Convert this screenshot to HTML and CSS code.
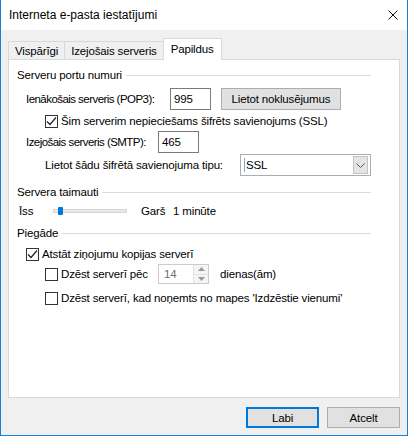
FILE: index.html
```html
<!DOCTYPE html>
<html>
<head>
<meta charset="utf-8">
<link rel="stylesheet" href="styles.css">
</head>
<body>
<div class="window">
  <div class="titlebar">
    <span class="title">Interneta e-pasta iestatījumi</span>
    <svg class="close" width="10" height="10" viewBox="0 0 10 10"><path d="M0.5 0.5L9.5 9.5M9.5 0.5L0.5 9.5" stroke="#111" stroke-width="1" fill="none"/></svg>
  </div>
  <div class="client">
    <div class="tabs">
      <div class="tab">Vispārīgi</div>
      <div class="tab">Izejošais serveris</div>
      <div class="tab active">Papildus</div>
    </div>
    <div class="panel">
      <div class="group-title t1"><span>Serveru portu numuri</span><span class="rule"></span></div>

      <div class="row r-pop3 ind1">
        <span class="label w-pop3 tight">Ienākošais serveris (POP3):</span>
        <div class="input port">995</div>
        <div class="btn btn-defaults">Lietot noklusējumus</div>
      </div>

      <div class="row r-ssl ind2">
        <span class="checkbox checked"><svg width="11" height="11" viewBox="0 0 11 11"><path d="M1 5.5L4 8.5L10 1.5" stroke="#222" stroke-width="1.2" fill="none"/></svg></span>
        <span class="cb-text">Šim serverim nepieciešams šifrēts savienojums (SSL)</span>
      </div>

      <div class="row r-smtp ind1">
        <span class="label w-smtp tight">Izejošais serveris (SMTP):</span>
        <div class="input port">465</div>
      </div>

      <div class="row r-enc ind2">
        <span class="label w-enc">Lietot šādu šifrētā savienojuma tipu:</span>
        <div class="select">
          <span class="caret"></span>
          <span class="sel-text">SSL</span>
          <span class="dd-btn"><svg width="9" height="5" viewBox="0 0 9 5"><path d="M0.5 0.5L4.5 4.5L8.5 0.5" stroke="#555" stroke-width="1" fill="none"/></svg></span>
        </div>
      </div>

      <div class="group-title t2"><span>Servera taimauti</span><span class="rule"></span></div>

      <div class="row r-slider ind0">
        <span class="label w-short">Īss</span>
        <div class="slider"><span class="track"></span><span class="thumb"></span></div>
        <span class="label w-long">Garš</span>
        <span class="label">1 minūte</span>
      </div>

      <div class="group-title t3"><span>Piegāde</span><span class="rule"></span></div>

      <div class="row r-keep ind1">
        <span class="checkbox checked"><svg width="11" height="11" viewBox="0 0 11 11"><path d="M1 5.5L4 8.5L10 1.5" stroke="#222" stroke-width="1.2" fill="none"/></svg></span>
        <span class="cb-text">Atstāt ziņojumu kopijas serverī</span>
      </div>

      <div class="row r-after ind2">
        <span class="checkbox"></span>
        <span class="cb-text w-after">Dzēst serverī pēc</span>
        <div class="spinner">
          <span class="spin-text">14</span>
          <span class="spin-btns">
            <span class="spin-up"><svg width="7" height="4" viewBox="0 0 7 4"><path d="M0 4L3.5 0L7 4Z" fill="#999"/></svg></span>
            <span class="spin-down"><svg width="7" height="4" viewBox="0 0 7 4"><path d="M0 0L3.5 4L7 0Z" fill="#999"/></svg></span>
          </span>
        </div>
        <span class="label days">dienas(ām)</span>
      </div>

      <div class="row r-del ind2">
        <span class="checkbox"></span>
        <span class="cb-text">Dzēst serverī, kad noņemts no mapes 'Izdzēstie vienumi'</span>
      </div>
    </div>
    <div class="buttons">
      <div class="btn dlg primary">Labi</div>
      <div class="btn dlg">Atcelt</div>
    </div>
  </div>
</div>
</body>
</html>
```

FILE: styles.css
```css
* { box-sizing: border-box; }
html, body { margin: 0; padding: 0; }
body {
  font-family: "Liberation Sans", Arial, sans-serif;
  font-size: 12px;
  color: #000;
  background: #fff;
}
.window {
  width: 408px;
  height: 436px;
  border: 1px solid #1a7fd4;
  border-top: none;
  display: flex;
  flex-direction: column;
}
.titlebar {
  height: 30px;
  background: #fff;
  display: flex;
  align-items: center;
  justify-content: space-between;
  padding: 0 9px 0 8px;
}
.title { font-size: 12px; line-height: 16px; }
.close { display: block; margin-top: 0; }
.client {
  flex: 1;
  background: #f0f0f0;
  padding: 8px 7px 7px 7px;
  display: flex;
  flex-direction: column;
  font-size: 11.5px;
  letter-spacing: -0.15px;
}
.tabs {
  display: flex;
  align-items: flex-end;
  height: 21px;
}
.tab {
  height: 18px;
  border: 1px solid #d9d9d9;
  border-bottom: none;
  padding: 0 6px;
  display: flex;
  align-items: center;
  line-height: 16px;
  background: #f0f0f0;
}
.tab + .tab { margin-left: -1px; }
.tab.active {
  height: 22px;
  margin-bottom: -1px;
  background: #fff;
  position: relative;
  z-index: 1;
  padding: 0 7px 2px 7px;
}
.panel {
  height: 339px;
  background: #fff;
  border: 1px solid #d9d9d9;
  padding: 6px 28px 0 0;
  display: flex;
  flex-direction: column;
}
.group-title {
  height: 18px;
  display: flex;
  align-items: center;
  padding-left: 8px;
  line-height: 16px;
}
.group-title .rule {
  flex: 1;
  height: 1px;
  background: #dcdcdc;
  margin-left: 4px;
  margin-top: 0;
}
.t2 { margin-top: 7px; }
.t3 { margin-top: 4px; }
.row {
  display: flex;
  align-items: center;
  line-height: 16px;
}
.ind0 { padding-left: 10px; }
.ind1 { padding-left: 17px; }
.ind2 { padding-left: 36px; }
.r-pop3 { height: 22px; margin-top: 4px; }
.r-ssl { height: 16px; margin-top: 3px; }
.r-smtp { height: 22px; margin-top: 2px; }
.r-enc { height: 22px; margin-top: 1px; }
.r-slider { height: 18px; margin-top: 1px; }
.r-keep { height: 16px; margin-top: 4px; }
.r-after { height: 20px; margin-top: 2px; }
.r-del { height: 16px; margin-top: 6px; }

.label { white-space: nowrap; flex: none; }
.tight { letter-spacing: -0.55px; }
.w-pop3 { width: 144px; }
.w-smtp { width: 132px; }
.w-enc { width: 195px; }
.w-short { width: 34px; }
.w-long { width: 32px; margin-left: 14px; }
.w-after { width: 97px; flex: none; }
.days { margin-left: 11px; }

.input {
  height: 22px;
  border: 1px solid #7a7a7a;
  background: #fff;
  padding: 0 3px;
  display: flex;
  align-items: center;
  flex: none;
}
.port { width: 41px; }
.btn {
  height: 22px;
  background: #e1e1e1;
  border: 1px solid #adadad;
  display: flex;
  align-items: center;
  justify-content: center;
  white-space: nowrap;
  flex: none;
}
.btn-defaults { width: 120px; margin-left: 10px; }

.checkbox {
  width: 13px;
  height: 13px;
  border: 1px solid #333;
  background: #fff;
  flex: none;
  display: flex;
  align-items: center;
  justify-content: center;
}
.checkbox svg { display: block; }
.cb-text { margin-left: 3px; white-space: nowrap; }

.select {
  width: 131px;
  height: 22px;
  border: 1px solid #adadad;
  background: #fff;
  display: flex;
  align-items: center;
  padding: 0 2px 0 3px;
  flex: none;
}
.caret { width: 1px; height: 14px; background: #7aa7d9; flex: none; }
.sel-text { flex: 1; padding-left: 1px; }
.dd-btn {
  width: 15px;
  height: 18px;
  background: #e5e5e5;
  border: 1px solid #c4c4c4;
  display: flex;
  align-items: center;
  justify-content: center;
}
.dd-btn svg { display: block; }

.slider {
  width: 74px;
  height: 18px;
  position: relative;
  flex: none;
  display: flex;
  align-items: center;
}
.track {
  display: block;
  width: 74px;
  height: 4px;
  background: #e7eaea;
  border: 1px solid #d6d6d6;
}
.thumb {
  position: absolute;
  left: 5px;
  top: 5px;
  width: 5px;
  height: 8px;
  background: #0078d7;
  border-radius: 1px;
}

.spinner {
  width: 51px;
  height: 20px;
  border: 1px solid #cccccc;
  background: #fff;
  display: flex;
  align-items: stretch;
  flex: none;
}
.spin-text { flex: 1; color: #6d6d6d; padding-left: 5px; display: flex; align-items: center; }
.spin-btns {
  width: 15px;
  display: flex;
  flex-direction: column;
  border-left: 1px solid #e3e3e3;
}
.spin-up, .spin-down {
  flex: 1;
  display: flex;
  align-items: center;
  justify-content: center;
  background: #f4f4f4;
}
.spin-up { border-bottom: 1px solid #e3e3e3; }
.spin-up svg, .spin-down svg { display: block; }

.buttons {
  display: flex;
  justify-content: flex-end;
  margin-top: 9px;
  gap: 8px;
}
.dlg { width: 73px; height: 21px; }
.primary { border: 2px solid #0078d7; }
```
